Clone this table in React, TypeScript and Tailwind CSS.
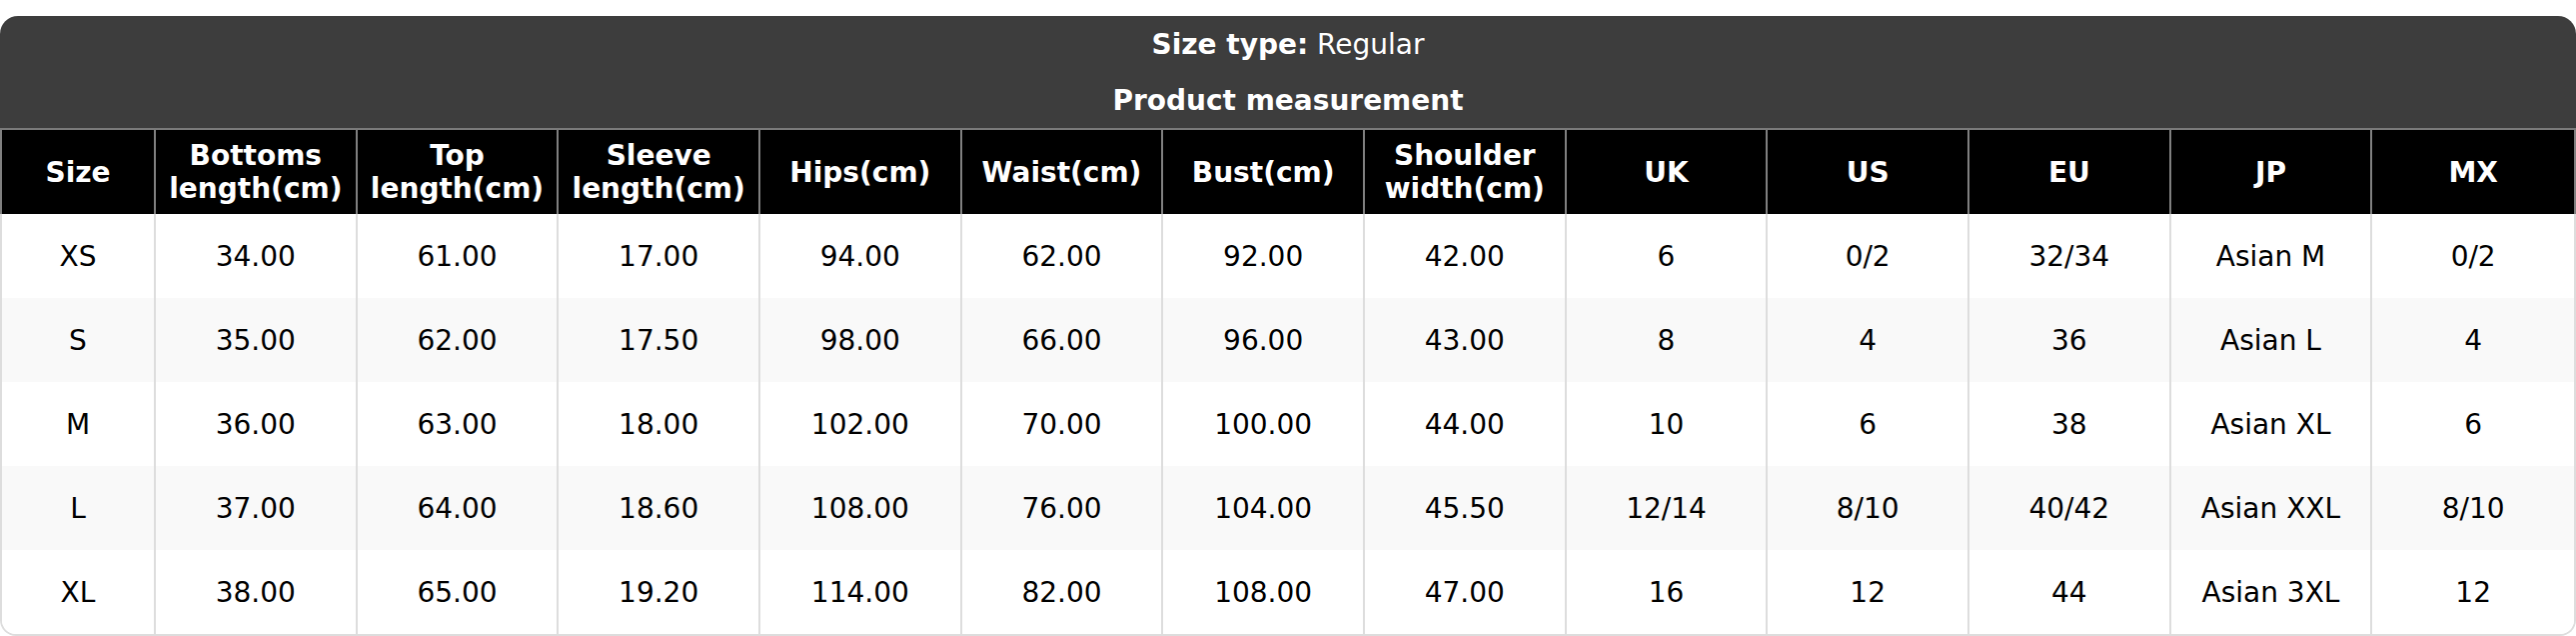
import React from "react";

const headers: string[][] = [
  ["Size"],
  ["Bottoms", "length(cm)"],
  ["Top", "length(cm)"],
  ["Sleeve", "length(cm)"],
  ["Hips(cm)"],
  ["Waist(cm)"],
  ["Bust(cm)"],
  ["Shoulder", "width(cm)"],
  ["UK"],
  ["US"],
  ["EU"],
  ["JP"],
  ["MX"],
];

const rows: string[][] = [
  ["XS", "34.00", "61.00", "17.00", "94.00", "62.00", "92.00", "42.00", "6", "0/2", "32/34", "Asian M", "0/2"],
  ["S", "35.00", "62.00", "17.50", "98.00", "66.00", "96.00", "43.00", "8", "4", "36", "Asian L", "4"],
  ["M", "36.00", "63.00", "18.00", "102.00", "70.00", "100.00", "44.00", "10", "6", "38", "Asian XL", "6"],
  ["L", "37.00", "64.00", "18.60", "108.00", "76.00", "104.00", "45.50", "12/14", "8/10", "40/42", "Asian XXL", "8/10"],
  ["XL", "38.00", "65.00", "19.20", "114.00", "82.00", "108.00", "47.00", "16", "12", "44", "Asian 3XL", "12"],
];

export default function App() {
  return (
    <div
      className="w-[2578px] h-[636px] bg-white pt-[16px]"
      style={{ fontFamily: '"DejaVu Sans", sans-serif' }}
    >
      <div className="w-full">
        <div className="bg-[#3d3d3d] rounded-t-[18px] text-white text-[28px] leading-[33px]">
          <div className="h-[56px] flex items-center justify-center">
            <span className="font-bold">Size type:</span>
            <span>&nbsp;Regular</span>
          </div>
          <div className="h-[56px] flex items-center justify-center font-bold">
            Product measurement
          </div>
        </div>
        <div className="h-[2px] bg-[#7a7a7a]" />
        <div className="grid grid-cols-[154px_repeat(12,minmax(0,1fr))] bg-black text-white font-bold text-[28px] leading-[33px] border-x-2 border-[#808080]">
          {headers.map((h, i) => (
            <div
              key={i}
              className={`h-[84px] flex flex-col items-center justify-center text-center ${
                i < headers.length - 1 ? "border-r-2 border-[#808080]" : ""
              }`}
            >
              {h.map((l, j) => (
                <div key={j}>{l}</div>
              ))}
            </div>
          ))}
        </div>
        <div className="border-x-2 border-b-2 border-[#dddddd] rounded-b-[16px] overflow-hidden">
          {rows.map((r, ri) => (
            <div
              key={ri}
              className={`grid grid-cols-[154px_repeat(12,minmax(0,1fr))] text-black text-[28px] leading-[33px] ${
                ri % 2 === 1 ? "bg-[#f9f9f9]" : "bg-white"
              }`}
            >
              {r.map((c, ci) => (
                <div
                  key={ci}
                  className={`h-[84px] flex items-center justify-center ${
                    ci < r.length - 1 ? "border-r-2 border-[#dddddd]" : ""
                  }`}
                >
                  {c}
                </div>
              ))}
            </div>
          ))}
        </div>
      </div>
    </div>
  );
}
